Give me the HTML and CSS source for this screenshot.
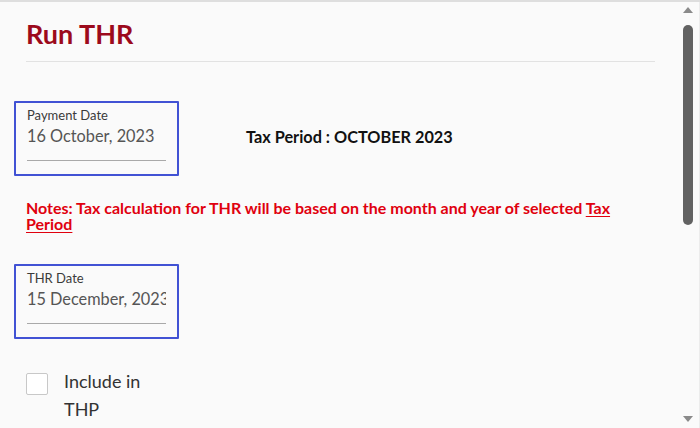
FILE: index.html
```html
<!DOCTYPE html>
<html lang="en">
<head>
    <meta charset="UTF-8">
    <meta name="viewport" content="width=device-width, initial-scale=1.0">
    <title>Run THR</title>
    <link rel="stylesheet" href="styles.css">
</head>
<body>

    <div class="dialog">
        <h1 class="title">Run THR</h1>

        <div class="row">
            <div class="field">
                <label for="paymentDate">Payment Date</label>
                <input type="text" id="paymentDate" value="16 October, 2023">
            </div>
            <div class="tax-period">Tax Period : OCTOBER 2023</div>
        </div>

        <p class="notes">Notes: Tax calculation for THR will be based on the month and year of selected <u>Tax Period</u></p>

        <div class="row">
            <div class="field">
                <label for="thrDate">THR Date</label>
                <input type="text" id="thrDate" value="15 December, 2023">
            </div>
        </div>

        <div class="check-row">
            <span class="checkbox"></span>
            <span class="check-label">Include in THP</span>
        </div>
    </div>

    <!-- fake scrollbar of the dialog -->
    <div class="scrollbar">
        <span class="arrow up"></span>
        <span class="thumb"></span>
        <span class="arrow down"></span>
    </div>

</body>
</html>
```

FILE: styles.css
```css
body {
    font-family: Lato, "Open Sans", sans-serif;
    margin: 0;
    padding: 0;
    background-color: #fafafa;
    border-top: 2px solid #dedede;
    height: 426px;
    overflow: hidden;
    position: relative;
}
.dialog {
    padding: 0 45px 0 26px;
}
.title {
    font-size: 27px;
    font-weight: 700;
    color: #9c0a1c;
    margin: 0;
    padding: 16px 0 12px;
    line-height: 31px;
    border-bottom: 1px solid #e2e2e2;
}
.row {
    display: flex;
    align-items: center;
    gap: 67px;
    margin-left: -12px;
}
.row:first-of-type {
    margin-top: 39px;
}
.field {
    width: 139px;
    padding: 5px 11px 13px;
    border: 2px solid #4152d4;
    border-radius: 1px;
}
.field label {
    display: block;
    font-size: 13px;
    line-height: 15px;
    color: #3a3a3a;
}
.field input {
    display: block;
    width: 100%;
    box-sizing: border-box;
    margin: 0;
    padding: 3px 0 15px;
    border: none;
    border-bottom: 1px solid #a9a9a9;
    background: transparent;
    font-family: inherit;
    font-size: 16.3px;
    line-height: 19px;
    color: #555;
    outline: none;
}
.tax-period {
    font-size: 16.3px;
    font-weight: 700;
    color: #111;
    margin-top: -4px;
}
.notes {
    margin: 24px 0 32px;
    font-size: 16px;
    font-weight: 700;
    line-height: 16px;
    color: #e0000e;
}
.notes u {
    text-decoration-thickness: 1px;
    text-underline-offset: 2px;
}
.check-row {
    display: flex;
    align-items: flex-start;
    gap: 16px;
    margin-top: 34px;
}
.checkbox {
    flex: none;
    width: 20px;
    height: 20px;
    border: 1px solid #c8c8c8;
    border-radius: 2px;
    background: white;
}
.check-label {
    width: 90px;
    font-size: 18px;
    line-height: 28px;
    color: #333;
    margin-top: -6px;
}
.scrollbar {
    position: absolute;
    top: -2px;
    right: 0;
    width: 17px;
    height: 428px;
    border-right: 1px solid #ececec;
}
.arrow {
    position: absolute;
    width: 0;
    height: 0;
    border-left: 5px solid transparent;
    border-right: 5px solid transparent;
}
.arrow.up {
    top: 7px;
    border-bottom: 6px solid #8a8a8a;
}
.arrow.down {
    bottom: 6px;
    border-top: 6px solid #8a8a8a;
}
.thumb {
    position: absolute;
    top: 25px;
    width: 10px;
    height: 200px;
    border-radius: 5px;
    background: #626262;
}
.scrollbar .arrow,
.scrollbar .thumb {
    left: 1px;
}
```
